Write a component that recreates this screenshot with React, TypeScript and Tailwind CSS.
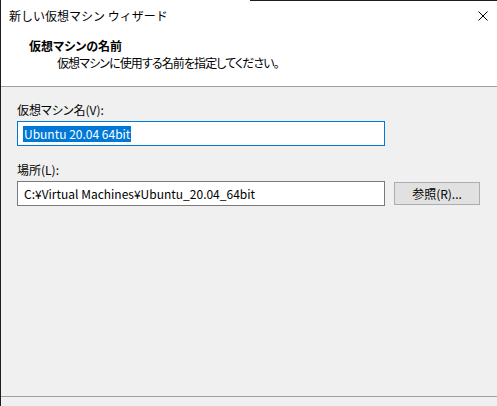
import React from 'react';

const font = "font-['Noto_Sans_CJK_JP','Noto_Sans',sans-serif]";
const palt = "[font-feature-settings:'palt']";

function CloseIcon() {
  return (
    <svg width="10" height="10" viewBox="0 0 10 10" className="block">
      <path d="M0.5 0.5 L9.5 9.5 M9.5 0.5 L0.5 9.5" stroke="#000" strokeWidth="1" fill="none" />
    </svg>
  );
}

export default function App() {
  return (
    <div className={`flex h-[406px] w-[497px] flex-col overflow-hidden border-l border-[#1e1e1e] bg-white text-[12px] leading-[16px] text-black ${font}`}>
      {/* top edge */}
      <div className="flex h-px">
        <div className="flex-1" />
        <div className="w-[247px] bg-[#1e1e1e]" />
      </div>

      {/* header */}
      <div className="flex h-[86px] flex-col border-b border-[#a0a0a0] bg-white">
        <div className="flex h-[29px] items-center justify-between pl-2 pr-[9px]">
          <span>新しい仮想マシン ウィザード</span>
          <CloseIcon />
        </div>
        <div className={`mt-[8px] pl-[28px] font-bold ${palt}`}>仮想マシンの名前</div>
        <div className={`mt-px pl-[56px] tracking-[-0.9px] ${palt}`}>仮想マシンに使用する名前を指定してください。</div>
      </div>

      {/* body */}
      <div className={`flex h-[309px] flex-col bg-[#f0f0f0] px-4 pt-[15px] ${palt}`}>
        <label>仮想マシン名(V):</label>
        <div className="mt-[3px] flex h-[25px] w-[368px] items-center border border-[#0078d7] bg-white pl-[5px]">
          <span className="bg-[#0078d7] px-px text-white">Ubuntu 20.04 64bit</span>
        </div>

        <label className="mt-[16px]">場所(L):</label>
        <div className="mt-[3px] flex items-center gap-[9px]">
          <div className="flex h-[25px] w-[368px] items-center border border-[#7a7a7a] bg-white pl-[6px]">
            C:¥Virtual Machines¥Ubuntu_20.04_64bit
          </div>
          <button className="flex h-[23px] w-[86px] items-center justify-center border border-[#adadad] bg-[#e1e1e1]">
            参照(R)...
          </button>
        </div>
      </div>

      {/* footer */}
      <div className="flex-1 border-t border-[#a0a0a0] bg-[#f0f0f0]" />
    </div>
  );
}
